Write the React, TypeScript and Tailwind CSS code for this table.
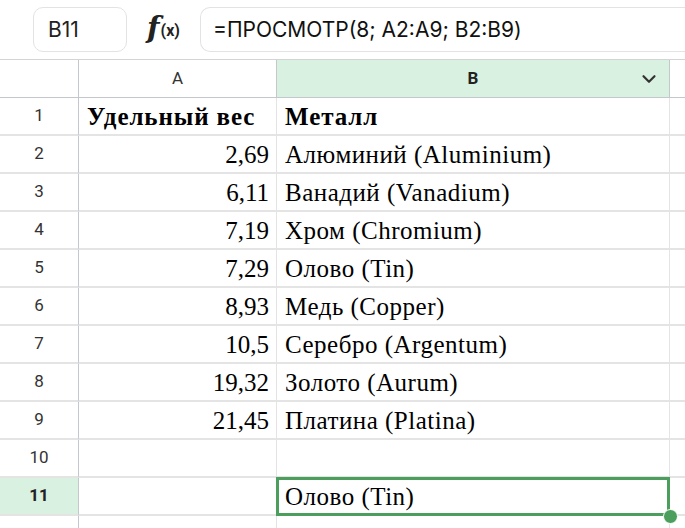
import { ChevronDown } from 'lucide-react';

const rows: [string, string, string][] = [
  ['1', 'Удельный вес', 'Металл'],
  ['2', '2,69', 'Алюминий (Aluminium)'],
  ['3', '6,11', 'Ванадий (Vanadium)'],
  ['4', '7,19', 'Хром (Chromium)'],
  ['5', '7,29', 'Олово (Tin)'],
  ['6', '8,93', 'Медь (Copper)'],
  ['7', '10,5', 'Серебро (Argentum)'],
  ['8', '19,32', 'Золото (Aurum)'],
  ['9', '21,45', 'Платина (Platina)'],
  ['10', '', ''],
];

function Cell({ children, bold, right }: { children?: React.ReactNode; bold?: boolean; right?: boolean }) {
  return (
    <div
      className={`h-[38px] border-r border-b-2 border-[#e4e4e4] flex items-center font-['Liberation_Serif',serif] text-[25px] leading-none text-black whitespace-nowrap ${
        bold ? 'font-bold tracking-[0.9px]' : ''
      } ${right ? 'justify-end pr-[7px]' : 'pl-[8px] tracking-[0.5px]'}`}
    >
      {children}
    </div>
  );
}

export default function App() {
  return (
    <div className="w-[685px] h-[528px] overflow-hidden bg-white font-['Roboto',sans-serif]">
      {/* toolbar */}
      <div className="h-[60px] flex items-center border-b border-[#d4d4d4] pl-[33px]">
        <div className="w-[94px] h-[45px] border border-[#e3e3e3] rounded-[10px] flex items-center pl-[14px] text-[21px] text-[#222] font-['Inter',sans-serif]">
          B11
        </div>
        <div className="w-[73px] flex items-center justify-center gap-[1px] text-[#222]">
          <span className="font-['DejaVu_Serif',serif] italic font-bold text-[29px] leading-none -mt-[2px]">f</span>
          <span className="font-bold text-[16px] leading-none mt-[2px]">(x)</span>
        </div>
        <div className="flex-1 h-[45px] border border-[#e3e3e3] rounded-l-[10px] border-r-0 flex items-center pl-[12px] text-[21px] text-[#111] font-['Inter',sans-serif]">
          =ПРОСМОТР(8; A2:A9; B2:B9)
        </div>
      </div>

      <div className="grid grid-cols-[79px_198px_393px_1fr]">
        {/* column header */}
        <div className="h-[38px] border-r border-b border-[#c4c7cc]" />
        <div className="h-[38px] border-r border-b border-[#c4c7cc] flex items-center justify-center text-[17px] text-[#333]">
          A
        </div>
        <div className="h-[38px] border-r border-b border-[#c4c7cc] bg-[#d9f1e1] flex items-center justify-center relative text-[17px] font-bold text-[#222]">
          B
          <ChevronDown className="absolute right-[9px] top-[8px] w-[22px] h-[22px] text-[#333]" strokeWidth={2.4} />
        </div>
        <div className="h-[38px] border-b border-[#c4c7cc]" />

        {rows.map(([n, a, b]) => (
          <div key={n} className="contents">
            <div className="h-[38px] border-r border-[#c4c7cc] border-b-2 border-b-[#e4e4e4] flex items-center justify-center text-[17px] text-[#333]">
              {n}
            </div>
            <Cell bold={n === '1'} right={n !== '1'}>
              {a}
            </Cell>
            <Cell bold={n === '1'}>{b}</Cell>
            <div className="h-[38px] border-b-2 border-[#e4e4e4]" />
          </div>
        ))}

        {/* row 11 */}
        <div className="h-[38px] border-r border-[#c4c7cc] border-b-2 border-b-[#e4e4e4] bg-[#d9f1e1] flex items-center justify-center text-[17px] font-bold text-[#222]">
          11
        </div>
        <div className="h-[38px] border-r border-b-2 border-[#e4e4e4]" />
        <div className="h-[38px] relative">
          <div className="absolute -left-[1px] -top-[1px] w-[394px] h-[39px] border-[3px] border-[#4b9e5b] flex items-center pl-[6px] font-['Liberation_Serif',serif] text-[25px] leading-none tracking-[0.5px] text-black">
            Олово (Tin)
          </div>
          <div className="absolute right-[-8px] bottom-[-8px] w-[15px] h-[15px] rounded-full bg-[#4b9e5b] border border-white" />
        </div>
        <div className="h-[38px] border-b-2 border-[#e4e4e4]" />

        <div className="h-[38px] border-r border-[#c4c7cc] flex items-start justify-center pt-[8px] text-[17px] text-[#333]">
          12
        </div>
        <div className="h-[38px] border-r border-[#e4e4e4]" />
        <div className="h-[38px] border-r border-[#e4e4e4]" />
        <div className="h-[38px]" />
      </div>
    </div>
  );
}
